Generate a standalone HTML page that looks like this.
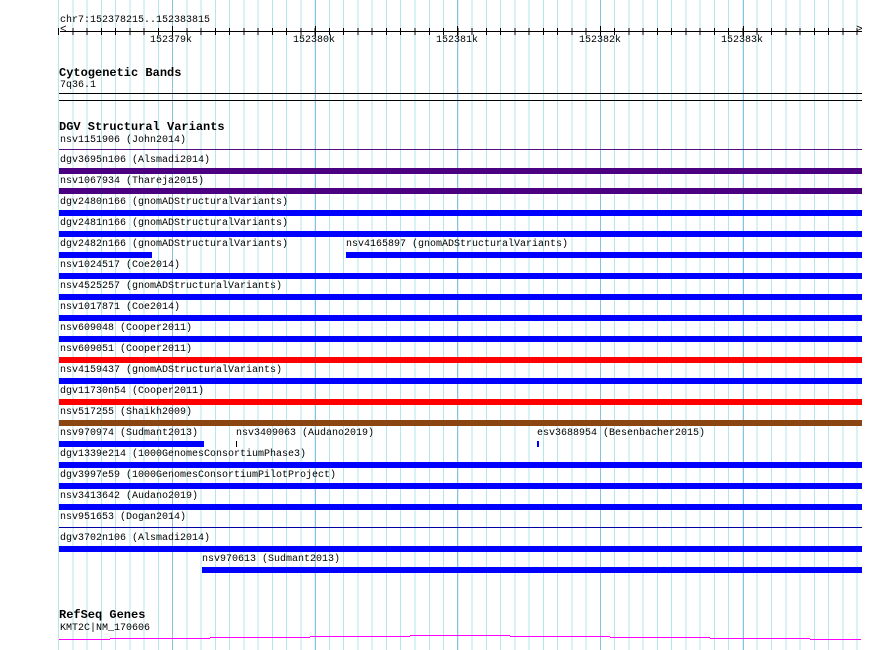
<!DOCTYPE html>
<html><head><meta charset="utf-8"><style>
html,body{margin:0;padding:0;background:#fff;}
body{width:890px;height:650px;position:relative;overflow:hidden;font-family:"Liberation Mono",monospace;}
.grid{position:absolute;left:58px;top:0;width:805px;height:650px;background:repeating-linear-gradient(to right,#b4e6ee 0,#b4e6ee 1px,transparent 1px,transparent 14.26px);}
.maj{position:absolute;top:0;width:1px;height:650px;background:#8cc0e0;}
.t{position:absolute;font-size:10px;line-height:11px;color:#000;white-space:pre;}
.h{position:absolute;font-size:12px;font-weight:bold;line-height:13px;color:#000;white-space:pre;}
.b{position:absolute;height:6px;}
.l{position:absolute;height:1px;}
.ticks{position:absolute;left:58px;top:28px;width:805px;height:7px;background:repeating-linear-gradient(to right,#000 0,#000 1px,transparent 1px,transparent 14.26px);}
.tk{position:absolute;top:26px;width:1px;height:10px;background:#000;}
.m{position:absolute;height:1px;background:#ff00ff;}
</style></head><body>
<div class="grid"></div>
<div class="maj" style="left:172px"></div>
<div class="maj" style="left:315px"></div>
<div class="maj" style="left:457px"></div>
<div class="maj" style="left:600px"></div>
<div class="maj" style="left:743px"></div>

<div class="t" style="left:60px;top:15px">chr7:152378215..152383815</div>
<div class="ticks"></div>
<div class="l" style="left:60px;top:31px;width:802px;background:#000"></div>
<div class="tk" style="left:172px"></div><div class="tk" style="left:315px"></div><div class="tk" style="left:457px"></div><div class="tk" style="left:600px"></div><div class="tk" style="left:743px"></div>
<div class="t" style="left:60px;top:25px;font-size:11px">&lt;</div>
<div class="t" style="left:856px;top:25px;font-size:11px">&gt;</div>
<div class="t" style="left:150px;top:35px">152379k</div>
<div class="t" style="left:293px;top:35px">152380k</div>
<div class="t" style="left:436px;top:35px">152381k</div>
<div class="t" style="left:579px;top:35px">152382k</div>
<div class="t" style="left:721px;top:35px">152383k</div>

<div class="h" style="left:59px;top:67px">Cytogenetic Bands</div>
<div class="t" style="left:60px;top:80px">7q36.1</div>
<div class="l" style="left:59px;top:93px;width:803px;background:#000"></div>
<div class="l" style="left:59px;top:100px;width:803px;background:#000"></div>

<div class="h" style="left:59px;top:121px">DGV Structural Variants</div>
<div class="t" style="left:60px;top:135px">nsv1151906 (John2014)</div>
<div class="l" style="left:59px;top:149px;width:803px;background:#50107f"></div>
<div class="t" style="left:60px;top:155px">dgv3695n106 (Alsmadi2014)</div>
<div class="b" style="left:59px;top:168px;width:803px;background:#4b0082"></div>
<div class="t" style="left:60px;top:176px">nsv1067934 (Thareja2015)</div>
<div class="b" style="left:59px;top:188px;width:803px;background:#4b0082"></div>
<div class="t" style="left:60px;top:197px">dgv2480n166 (gnomADStructuralVariants)</div>
<div class="b" style="left:59px;top:210px;width:803px;background:#00f"></div>
<div class="t" style="left:60px;top:218px">dgv2481n166 (gnomADStructuralVariants)</div>
<div class="b" style="left:59px;top:231px;width:803px;background:#00f"></div>
<div class="t" style="left:60px;top:239px">dgv2482n166 (gnomADStructuralVariants)</div>
<div class="b" style="left:59px;top:252px;width:93px;background:#00f"></div>
<div class="t" style="left:346px;top:239px">nsv4165897 (gnomADStructuralVariants)</div>
<div class="b" style="left:346px;top:252px;width:516px;background:#00f"></div>
<div class="t" style="left:60px;top:260px">nsv1024517 (Coe2014)</div>
<div class="b" style="left:59px;top:273px;width:803px;background:#00f"></div>
<div class="t" style="left:60px;top:281px">nsv4525257 (gnomADStructuralVariants)</div>
<div class="b" style="left:59px;top:294px;width:803px;background:#00f"></div>
<div class="t" style="left:60px;top:302px">nsv1017871 (Coe2014)</div>
<div class="b" style="left:59px;top:315px;width:803px;background:#00f"></div>
<div class="t" style="left:60px;top:323px">nsv609048 (Cooper2011)</div>
<div class="b" style="left:59px;top:336px;width:803px;background:#00f"></div>
<div class="t" style="left:60px;top:344px">nsv609051 (Cooper2011)</div>
<div class="b" style="left:59px;top:357px;width:803px;background:#f00"></div>
<div class="t" style="left:60px;top:365px">nsv4159437 (gnomADStructuralVariants)</div>
<div class="b" style="left:59px;top:378px;width:803px;background:#00f"></div>
<div class="t" style="left:60px;top:386px">dgv11730n54 (Cooper2011)</div>
<div class="b" style="left:59px;top:399px;width:803px;background:#f00"></div>
<div class="t" style="left:60px;top:407px">nsv517255 (Shaikh2009)</div>
<div class="b" style="left:59px;top:420px;width:803px;background:#8b4513"></div>
<div class="t" style="left:60px;top:428px">nsv970974 (Sudmant2013)</div>
<div class="b" style="left:59px;top:441px;width:145px;background:#00f"></div>
<div class="t" style="left:236px;top:428px">nsv3409063 (Audano2019)</div>
<div class="b" style="left:236px;top:441px;width:1px;background:#000"></div>
<div class="t" style="left:537px;top:428px">esv3688954 (Besenbacher2015)</div>
<div class="b" style="left:537px;top:441px;width:2px;background:#00f"></div>
<div class="t" style="left:60px;top:449px">dgv1339e214 (1000GenomesConsortiumPhase3)</div>
<div class="b" style="left:59px;top:462px;width:803px;background:#00f"></div>
<div class="t" style="left:60px;top:470px">dgv3997e59 (1000GenomesConsortiumPilotProject)</div>
<div class="b" style="left:59px;top:483px;width:803px;background:#00f"></div>
<div class="t" style="left:60px;top:491px">nsv3413642 (Audano2019)</div>
<div class="b" style="left:59px;top:504px;width:803px;background:#00f"></div>
<div class="t" style="left:60px;top:512px">nsv951653 (Dogan2014)</div>
<div class="l" style="left:59px;top:527px;width:803px;background:#0000a0"></div>
<div class="t" style="left:60px;top:533px">dgv3702n106 (Alsmadi2014)</div>
<div class="b" style="left:59px;top:546px;width:803px;background:#00f"></div>
<div class="t" style="left:202px;top:554px">nsv970613 (Sudmant2013)</div>
<div class="b" style="left:202px;top:567px;width:660px;background:#00f"></div>

<div class="h" style="left:59px;top:609px">RefSeq Genes</div>
<div class="t" style="left:60px;top:623px">KMT2C|NM_170606</div>
<div class="m" style="left:59px;top:639px;width:51px"></div>
<div class="m" style="left:110px;top:638px;width:100px"></div>
<div class="m" style="left:210px;top:637px;width:100px"></div>
<div class="m" style="left:310px;top:636px;width:100px"></div>
<div class="m" style="left:410px;top:635px;width:100px"></div>
<div class="m" style="left:510px;top:636px;width:100px"></div>
<div class="m" style="left:610px;top:637px;width:100px"></div>
<div class="m" style="left:710px;top:638px;width:100px"></div>
<div class="m" style="left:810px;top:639px;width:51px"></div>
</body></html>
